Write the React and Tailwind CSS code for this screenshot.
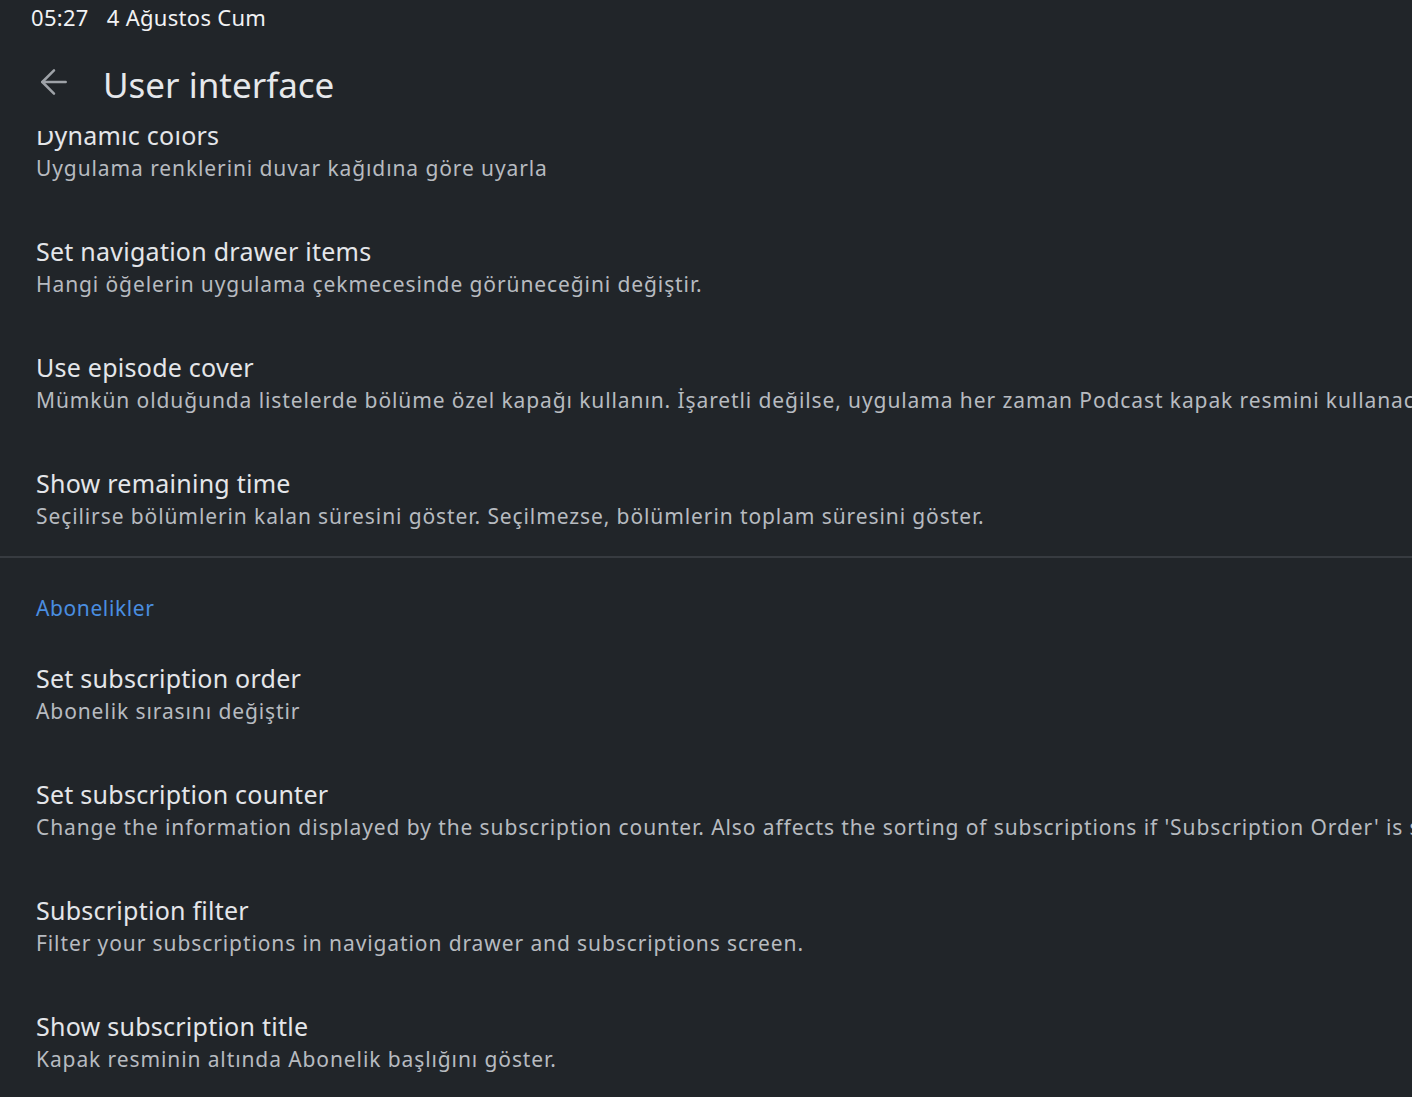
import React from 'react';
import { ArrowLeft } from 'lucide-react';

const uiItems = [
    { title: 'Set navigation drawer items', summary: 'Hangi öğelerin uygulama çekmecesinde görüneceğini değiştir.' },
    { title: 'Use episode cover', summary: 'Mümkün olduğunda listelerde bölüme özel kapağı kullanın. İşaretli değilse, uygulama her zaman Podcast kapak resmini kullanacaktır.' },
    { title: 'Show remaining time', summary: 'Seçilirse bölümlerin kalan süresini göster. Seçilmezse, bölümlerin toplam süresini göster.' },
];

const subItems = [
    { title: 'Set subscription order', summary: 'Abonelik sırasını değiştir' },
    { title: 'Set subscription counter', summary: "Change the information displayed by the subscription counter. Also affects the sorting of subscriptions if 'Subscription Order' is set to 'Counter'." },
    { title: 'Subscription filter', summary: 'Filter your subscriptions in navigation drawer and subscriptions screen.' },
    { title: 'Show subscription title', summary: 'Kapak resminin altında Abonelik başlığını göster.' },
];

function Pref({ title, summary }) {
    return (
        <div className="pl-[36px] pt-[26px] pb-[24px] whitespace-nowrap">
            <div className="text-[25px] leading-[34px] text-[#e4e6e9] tracking-[0.25px]">{title}</div>
            <div className="text-[21px] leading-[32px] text-[#b7bbc0] tracking-[0.9px]">{summary}</div>
        </div>
    );
}

export default function App() {
    return (
        <div
            className="w-[1412px] h-[1097px] bg-[#212529] overflow-hidden flex flex-col"
            style={{ fontFamily: '"Noto Sans", "Open Sans", sans-serif' }}
        >
            {/* status bar */}
            <div className="h-[35px] flex items-center pl-[31px] gap-[18px] text-[22px] text-[#f1f2f4] tracking-[0.3px] shrink-0">
                <span>05:27</span>
                <span>4 Ağustos Cum</span>
            </div>

            {/* toolbar */}
            <div className="h-[96px] flex items-center shrink-0">
                <div className="w-[103px] flex items-center pl-[34px] pb-[2px]">
                    <ArrowLeft size={40} strokeWidth={1.5} className="text-[#9ea2a7]" />
                </div>
                <h1 className="text-[35px] text-[#e6e8eb] leading-none pt-[2px]">User interface</h1>
            </div>

            {/* list */}
            <div className="flex-1 overflow-hidden">
                <div className="-mt-[39px]">
                    <Pref title="Dynamic colors" summary="Uygulama renklerini duvar kağıdına göre uyarla" />
                    {uiItems.map((it) => (
                        <Pref key={it.title} {...it} />
                    ))}
                    <div className="h-[2px] bg-[#373b40]" />
                    <div className="pl-[36px] pt-[35px] pb-[12px] text-[21px] leading-[30px] text-[#4a8ee0] tracking-[0.6px]">Abonelikler</div>
                    {subItems.map((it) => (
                        <Pref key={it.title} {...it} />
                    ))}
                </div>
            </div>
        </div>
    );
}
